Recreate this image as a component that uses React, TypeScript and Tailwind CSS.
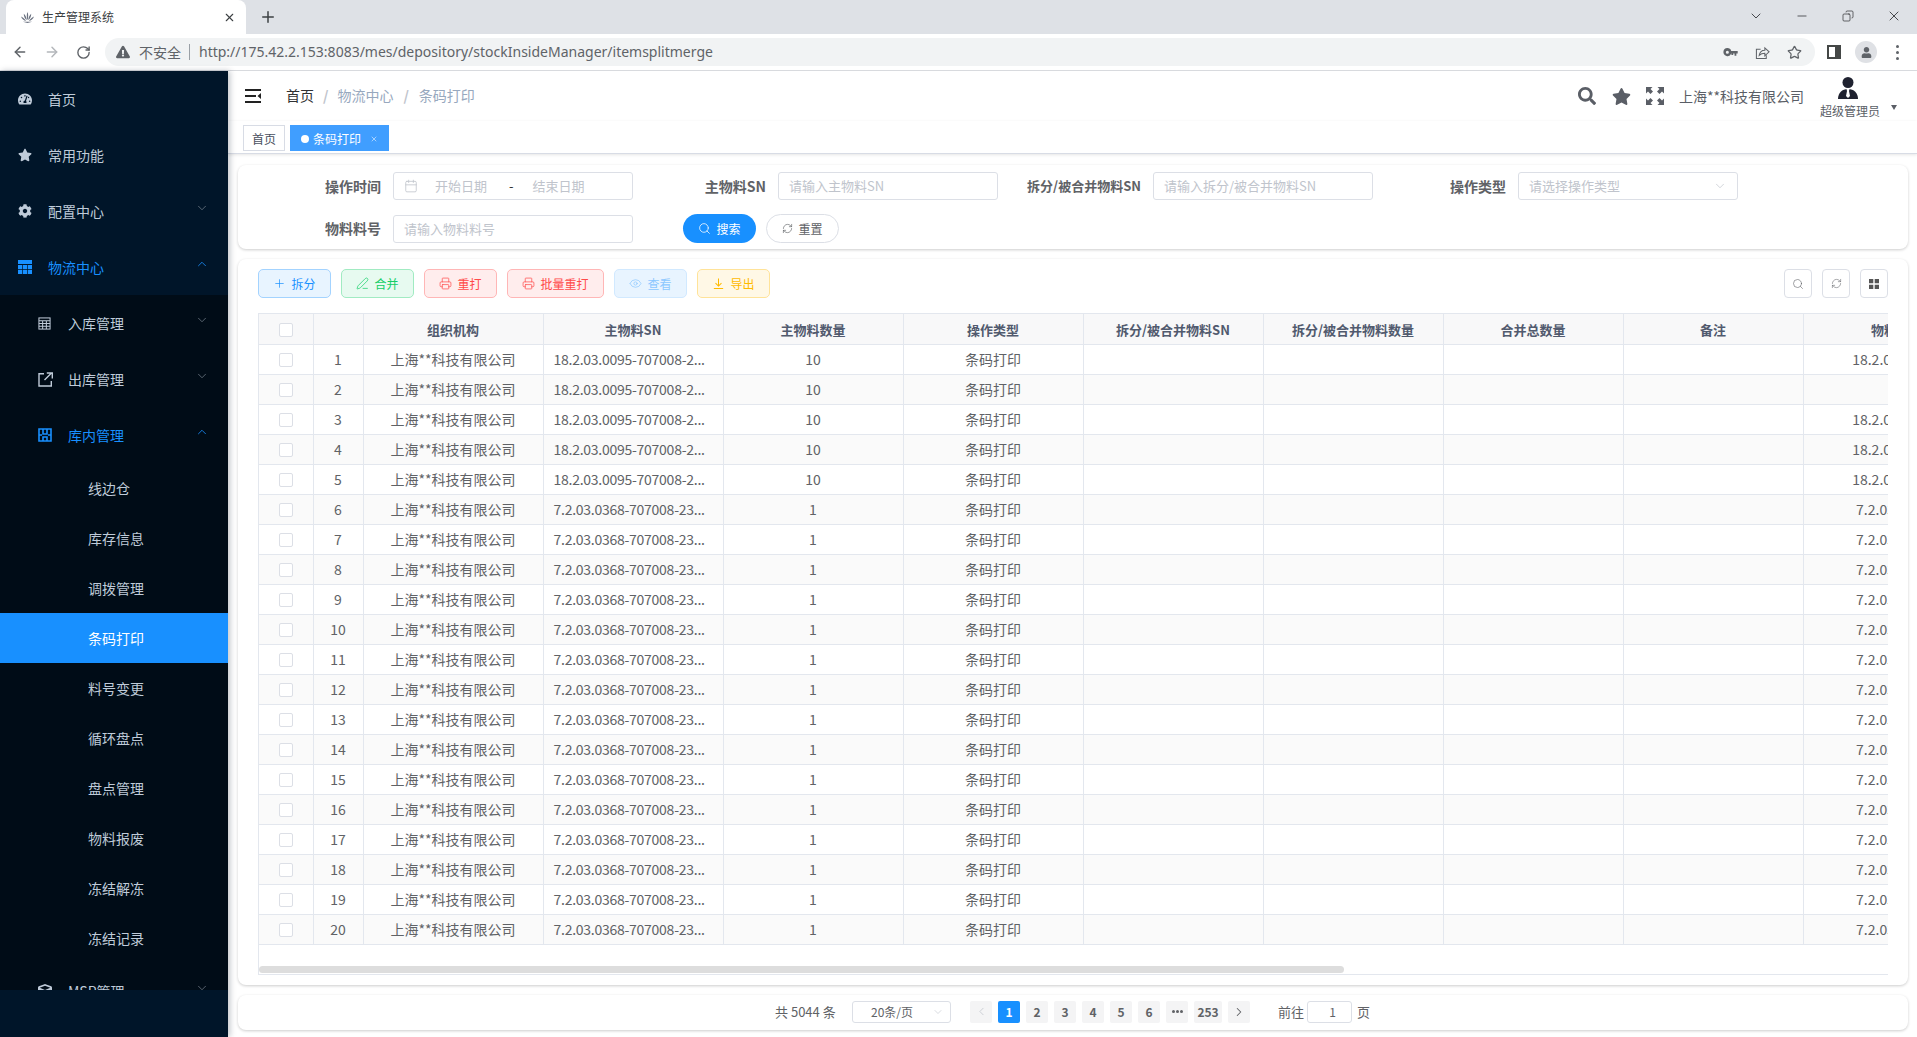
import React from "react";
import { ArrowLeft, ArrowRight, RotateCw, X, Plus, ChevronDown, ChevronUp, ChevronLeft, ChevronRight, Minus, Copy, Star, Search, Calendar, Printer, Eye, RefreshCw, PenLine } from "lucide-react";
import { FaTachometerAlt, FaStar, FaCog, FaCube, FaSearch, FaExclamationTriangle, FaUser } from "react-icons/fa";

const GridIcon = ({ className = "" }: { className?: string }) => (
  <svg viewBox="0 0 14 14" className={className} fill="currentColor"><path d="M0 0h14v4H0ZM0 5h4.200v4H0ZM4.900 5h4.200v4H4.900ZM9.800 5H14v4H9.800ZM0 9.800h4.200V14H0ZM4.900 9.800h4.200V14H4.900ZM9.800 9.800H14V14H9.800Z" /></svg>
);
const CalcIcon = ({ className = "" }: { className?: string }) => (
  <svg viewBox="0 0 14 14" className={className} fill="none" stroke="currentColor" strokeWidth="1.1"><rect x="1" y="1" width="12" height="12" /><path d="M1 4h12M1 7h12M1 10h12M5 4v9M9 4v9" /></svg>
);
const StockIcon = ({ className = "" }: { className?: string }) => (
  <svg viewBox="0 0 14 14" className={className} fill="none" stroke="currentColor" strokeWidth="1.6"><path d="M1 1h12v12H1zM1 7h3M10 7h3M5 1v5h4V1M5 13V9h4v4" /></svg>
);
const OutIcon = ({ className = "" }: { className?: string }) => (
  <svg viewBox="0 0 15 15" className={className} fill="none" stroke="currentColor" strokeWidth="1.4"><path d="M6 1.700H1v12.300h12.300V9" /><path d="M6.500 8 13.500 1M8.800 1h5.500v5.500" /></svg>
);
const Lotus = () => (
  <svg viewBox="0 0 16 14" className="h-[13px] w-[15px]" fill="#6b7280"><path d="M8 1c1 2 1 6 0 9-1-3-1-7 0-9ZM4 3c1.800 1.500 3 4 3.200 7C5.200 8.500 4 6 4 3Zm8 0c0 3-1.200 5.500-3.200 7C9 7 10.200 4.500 12 3ZM1 6c2 .8 4 2.500 5.500 4.800C4 10.500 2 8.500 1 6Zm14 0c-1 2.500-3 4.500-5.500 4.800C11 8.500 13 6.800 15 6ZM3 11.500h10L8 13Z" /></svg>
);
const MenuFold = () => (
  <svg viewBox="0 0 16 14" className="h-[14px] w-[16px]" fill="#222"><path d="M0 0h16v2H0zM0 6h11v2H0zM0 12h16v2H0zM16 4v6l-3.500-3z" /></svg>
);
const Person = () => (
  <svg viewBox="0 0 20 22" className="mr-[5px] h-[22px] w-[20px]"><circle cx="10" cy="5.500" r="5.500" fill="#1f2230" /><path d="M0 22c0-6 4-10 10-10s10 4 10 10Z" fill="#1f2230" /><path d="M8.500 12h3l-.5 2 1 5-2 2-2-2 1-5Z" fill="#fff" /></svg>
);
const Squares = () => (
  <svg viewBox="0 0 10 10" className="h-[10px] w-[10px]" fill="#555"><path d="M0 0h4.300v4.300H0zM5.700 0H10v4.300H5.700zM0 5.700h4.300V10H0zM5.700 5.700H10V10H5.700z" /></svg>
);
const FullScreen = () => (
  <svg viewBox="0 0 18 18" className="h-[18px] w-[18px]" fill="#5a5e66">
    <path d="M0 0h6.500L4.500 2l2.500 2.500L4.500 7 2 4.500 0 6.500Z" />
    <path d="M18 0h-6.500l2 2L11 4.500 13.500 7 16 4.500l2 2Z" />
    <path d="M0 18h6.500l-2-2L7 13.500 4.500 11 2 13.500l-2-2Z" />
    <path d="M18 18h-6.500l2-2-2.500-2.500 2.500-2.500 2.500 2.500 2-2Z" />
  </svg>
);
const KeyIcon = () => (
  <svg viewBox="0 0 16 10" className="h-[9px] w-[15px]" fill="#5f6368"><path d="M4.500 0A4.500 4.500 0 0 1 8.800 3.200H16v3h-1.500v2.300h-2V6.200h-1.500v1.500H9V6.200h-.2A4.500 4.500 0 1 1 4.500 0Zm0 3a1.700 1.700 0 1 0 0 3.400 1.700 1.700 0 0 0 0-3.400Z" fillRule="evenodd" /></svg>
);
const ShareIcon = () => (
  <svg viewBox="0 0 16 16" className="h-[15px] w-[15px]" fill="none" stroke="#5f6368" strokeWidth="1.100"><path d="M6 4.500H1.500v10H12v-3.500" /><path d="M4.500 11c.5-3.500 3-5.500 6-5.500V3l4.500 4.200-4.500 4.300V8.800c-2.500 0-4.500.7-6 2.200Z" /></svg>
);
const DownIcon = () => (
  <svg viewBox="0 0 14 14" className="h-[13px] w-[13px]" fill="none" stroke="currentColor" strokeWidth="1.100"><path d="M7 1.500v8M3.800 6.500 7 9.700l3.200-3.200M2 12.500h10" /></svg>
);

const Top = ({ icon, label, chevron, active }: { icon: React.ReactNode; label: string; chevron?: "up" | "down"; active?: boolean }) => (
  <div className={`flex h-[56px] items-center pl-[18px] pr-[19px] text-sm ${active ? "text-[#1890ff]" : "text-[#bfcbd9]"}`}>
    <span className="flex w-[30px] shrink-0 items-center">{icon}</span>
    <span>{label}</span>
    {chevron === "down" && <ChevronDown size={14} strokeWidth={1.2} className="mb-[6px] ml-auto text-[#7c8894]" />}
    {chevron === "up" && <ChevronUp size={14} strokeWidth={1.4} className="mb-[6px] ml-auto text-[#1890ff]" />}
  </div>
);
const Second = ({ icon, label, chevron, active }: { icon: React.ReactNode; label: string; chevron: "up" | "down"; active?: boolean }) => (
  <div className={`flex h-[56px] items-center pl-[38px] pr-[19px] text-sm ${active ? "text-[#1890ff]" : "text-[#bfcbd9]"}`}>
    <span className="flex w-[30px] shrink-0 items-center">{icon}</span>
    <span>{label}</span>
    {chevron === "down" ? <ChevronDown size={14} strokeWidth={1.2} className="mb-[6px] ml-auto text-[#7c8894]" /> : <ChevronUp size={14} strokeWidth={1.4} className="mb-[6px] ml-auto text-[#1890ff]" />}
  </div>
);
const Third = ({ label, active }: { label: string; active?: boolean }) => (
  <div className={`flex h-[50px] items-center pl-[88px] text-sm ${active ? "bg-[#1890ff] text-white" : "text-[#bfcbd9]"}`}>{label}</div>
);

const Sidebar = () => (
  <aside className="z-10 flex w-[228px] shrink-0 flex-col bg-[#001529] shadow-[2px_0_6px_rgba(0,21,41,0.25)]">
    <div className="h-[919px] shrink-0 overflow-hidden">
      <Top icon={<FaTachometerAlt size={14} />} label="首页" />
      <Top icon={<FaStar size={14} />} label="常用功能" />
      <Top icon={<FaCog size={14} />} label="配置中心" chevron="down" />
      <Top icon={<GridIcon className="h-[14px] w-[14px]" />} label="物流中心" chevron="up" active />
      <div className="bg-[#000c17]">
        <Second icon={<CalcIcon className="h-[13px] w-[13px]" />} label="入库管理" chevron="down" />
        <Second icon={<OutIcon className="h-[15px] w-[15px]" />} label="出库管理" chevron="down" />
        <Second icon={<StockIcon className="h-[14px] w-[14px]" />} label="库内管理" chevron="up" active />
        {["线边仓", "库存信息", "调拨管理"].map((t) => <Third key={t} label={t} />)}
        <Third label="条码打印" active />
        {["料号变更", "循环盘点", "盘点管理", "物料报废", "冻结解冻", "冻结记录"].map((t) => <Third key={t} label={t} />)}
        <Second icon={<FaCube size={14} />} label="MSP管理" chevron="down" />
      </div>
    </div>
  </aside>
);

const BrowserBar = () => (
  <>
    <div className="flex h-[34px] shrink-0 items-end bg-[#dee1e6] pl-[6px]">
      <div className="flex h-[34px] w-[240px] items-center rounded-t-lg bg-white pl-[14px] pr-[10px]">
        <Lotus />
        <span className="ml-[7px] text-xs text-[#3c4043]">生产管理系统</span>
        <X size={13} strokeWidth={2} className="ml-auto text-[#3c4043]" />
      </div>
      <Plus size={18} strokeWidth={2} className="mb-[8px] ml-[13px] text-[#3c4043]" />
      <div className="mb-[10px] ml-auto flex items-center text-[#202124]">
        <span className="flex w-[46px] justify-center"><ChevronDown size={16} strokeWidth={1.2} /></span>
        <span className="flex w-[46px] justify-center"><Minus size={14} strokeWidth={1.2} /></span>
        <span className="flex w-[46px] justify-center"><Copy size={12} strokeWidth={1.3} className="-scale-x-100" /></span>
        <span className="flex w-[46px] justify-center"><X size={16} strokeWidth={1.2} /></span>
      </div>
    </div>
    <div className="flex h-[37px] shrink-0 items-center border-b border-[#dadce0] bg-white pl-[12px] pr-[18px]">
      <ArrowLeft size={16} strokeWidth={2.2} className="text-[#5f6368]" />
      <ArrowRight size={16} strokeWidth={2.2} className="ml-[16px] text-[#b3b6ba]" />
      <RotateCw size={15} strokeWidth={2.2} className="ml-[16px] text-[#5f6368]" />
      <div className="ml-[14px] flex h-[28px] flex-1 items-center rounded-full bg-[#f1f3f4] pl-[11px] pr-[13px] text-sm text-[#5f6368]">
        <FaExclamationTriangle size={14} className="text-[#5f6368]" />
        <span className="ml-[9px]">不安全</span>
        <span className="mx-[8px] h-[16px] w-px bg-[#9aa0a6]" />
        <span className="ml-px font-['Noto_Sans',sans-serif] text-sm">http://175.42.2.153:8083/mes/depository/stockInsideManager/itemsplitmerge</span>
        <div className="ml-auto flex items-center gap-[17px]">
          <KeyIcon />
          <ShareIcon />
          <Star size={15} strokeWidth={2} />
        </div>
      </div>
      <div className="ml-[12px] h-[14px] w-[14px] border-2 border-r-[6px] border-[#444746]" />
      <div className="ml-[14px] flex h-[22px] w-[22px] items-center justify-center rounded-full bg-[#dfe1e5] text-[#5f6368]"><FaUser size={11} /></div>
      <span className="ml-[19px] flex flex-col gap-[3px]">
        <span className="h-[3px] w-[3px] rounded-full bg-[#5f6368]" />
        <span className="h-[3px] w-[3px] rounded-full bg-[#5f6368]" />
        <span className="h-[3px] w-[3px] rounded-full bg-[#5f6368]" />
      </span>
    </div>
  </>
);

const Header = () => (
  <>
    <div className="flex h-[50px] shrink-0 items-center bg-white pl-[17px] pr-[20px] shadow-[0_1px_3px_rgba(0,21,41,0.06)]">
      <MenuFold />
      <div className="mb-[2px] ml-[25px] flex items-center text-sm text-[#97a8be]">
        <span className="text-[#303133]">首页</span>
        <span className="mx-[9px] font-bold text-[#c0c4cc]">/</span>
        <span>物流中心</span>
        <span className="mx-[10px] font-bold text-[#c0c4cc]">/</span>
        <span>条码打印</span>
      </div>
      <div className="ml-auto flex items-center text-[#5a5e66]">
        <FaSearch size={18} />
        <FaStar size={19} className="ml-[16px]" />
        <span className="ml-[15px]"><FullScreen /></span>
        <span className="ml-[15px] text-sm">上海**科技有限公司</span>
        <div className="ml-[16px] mt-[4px] flex w-[60px] flex-col items-center">
          <Person />
          <span className="mt-[3px] text-xs leading-[17px]">超级管理员</span>
        </div>
        <span className="ml-[11px] mt-[22px] h-0 w-0 border-x-[3.500px] border-t-[5px] border-x-transparent border-t-[#5a5e66]" />
      </div>
    </div>
    <div className="flex h-[33px] shrink-0 items-center gap-[5px] border-b border-[#d8dce5] bg-white pl-[15px] pt-[2px] shadow-[0_1px_3px_rgba(0,0,0,0.1)]">
      <span className="flex h-[26px] w-[42px] items-center justify-center border border-[#d8dce5] pt-px text-xs text-[#495060]">首页</span>
      <span className="flex h-[26px] w-[99px] items-center justify-center bg-[#409eff] pt-px text-xs text-white">
        <span className="mr-[4px] h-[8px] w-[8px] rounded-full bg-white" />条码打印<X size={8} className="ml-[9px] opacity-80" />
      </span>
    </div>
  </>
);

const Field = ({ label, labelW, inputW, ph, select, small }: { label: string; labelW: string; inputW: string; ph: string; select?: boolean; small?: boolean }) => (
  <div className="flex items-center">
    <span className={`${labelW} ${small ? "text-[13px]" : "text-sm"} shrink-0 pb-px pr-[12px] text-right font-bold text-[#606266]`}>{label}</span>
    <div className={`${inputW} flex h-[28px] items-center rounded-[3px] border border-[#dcdfe6] pl-[10px] pr-[10px] text-[13px] text-[#c0c4cc]`}>
      <span>{ph}</span>
      {select && <ChevronDown size={14} strokeWidth={1.2} className="ml-auto" />}
    </div>
  </div>
);

const SearchCard = () => (
  <div className="flex h-[84px] shrink-0 flex-col gap-[14px] rounded-lg bg-white pt-[7px] shadow-[0_1px_3px_rgba(0,0,0,0.2)]">
    <div className="flex items-center">
      <span className="w-[155px] shrink-0 pb-px pr-[12px] text-right text-sm font-bold text-[#606266]">操作时间</span>
      <div className="flex h-[28px] w-[240px] items-center rounded-[3px] border border-[#dcdfe6] pl-[10px] text-[13px] text-[#c0c4cc]">
        <Calendar size={14} strokeWidth={1.4} />
        <span className="ml-[17px] w-[52px]">开始日期</span>
        <span className="ml-[22px] text-[#303133]">-</span>
        <span className="ml-[19px]">结束日期</span>
      </div>
      <Field label="主物料SN" labelW="w-[145px]" inputW="w-[220px]" ph="请输入主物料SN" />
      <Field label="拆分/被合并物料SN" labelW="w-[155px]" inputW="w-[220px]" ph="请输入拆分/被合并物料SN" small />
      <Field label="操作类型" labelW="w-[145px]" inputW="w-[220px]" ph="请选择操作类型" select />
    </div>
    <div className="flex items-center">
      <Field label="物料料号" labelW="w-[155px]" inputW="w-[240px]" ph="请输入物料料号" />
      <button className="ml-[50px] flex h-[29px] w-[73px] items-center justify-center gap-[5px] rounded-full bg-[#1890ff] text-xs text-white"><Search size={13} strokeWidth={1.4} />搜索</button>
      <button className="ml-[10px] flex h-[29px] w-[73px] items-center justify-center gap-[5px] rounded-full border border-[#dcdfe6] bg-white text-xs text-[#606266]"><RefreshCw size={11} strokeWidth={1.4} />重置</button>
    </div>
  </div>
);

const tools = [
  { t: "拆分", w: "w-[73px]", c: "border-[#a3d3ff] bg-[#e8f4ff] text-[#1890ff]", i: <Plus size={13} strokeWidth={1.3} /> },
  { t: "合并", w: "w-[73px]", c: "border-[#a1ebc2] bg-[#e7faf0] text-[#13ce66]", i: <PenLine size={13} strokeWidth={1.3} /> },
  { t: "重打", w: "w-[73px]", c: "border-[#ffb6b6] bg-[#ffeded] text-[#ff4949]", i: <Printer size={13} strokeWidth={1.3} /> },
  { t: "批量重打", w: "w-[97px]", c: "border-[#ffb6b6] bg-[#ffeded] text-[#ff4949]", i: <Printer size={13} strokeWidth={1.3} /> },
  { t: "查看", w: "w-[73px]", c: "border-[#d1e9ff] bg-[#e8f4ff] text-[#8cc8ff]", i: <Eye size={13} strokeWidth={1.3} /> },
  { t: "导出", w: "w-[73px]", c: "border-[#ffe399] bg-[#fff8e6] text-[#ffba00]", i: <DownIcon /> },
];

const headers = ["组织机构", "主物料SN", "主物料数量", "操作类型", "拆分/被合并物料SN", "拆分/被合并物料数量", "合并总数量", "备注", "物料SN"];
const rows = Array.from({ length: 20 }, (_, i) => i + 1);
const cell = "border-r border-b border-[#e3e7ee] px-[10px] text-center";

const TableCard = () => (
  <div className="mt-[10px] flex h-[726px] shrink-0 flex-col rounded-lg bg-white px-[20px] pb-[10px] pt-[10px] shadow-[0_1px_3px_rgba(0,0,0,0.2)]">
    <div className="flex h-[29px] shrink-0 items-center gap-[10px]">
      {tools.map((b) => (
        <button key={b.t} className={`${b.w} ${b.c} flex h-[29px] items-center justify-center gap-[5px] rounded-[5px] border text-xs`}>{b.i}{b.t}</button>
      ))}
      <div className="ml-auto flex gap-[10px]">
        <span className="flex h-[29px] w-[28px] items-center justify-center rounded-[4px] border border-[#dcdfe6] text-[#606266]"><Search size={12} strokeWidth={1.2} /></span>
        <span className="flex h-[29px] w-[28px] items-center justify-center rounded-[4px] border border-[#dcdfe6] text-[#606266]"><RefreshCw size={11} strokeWidth={1.2} /></span>
        <span className="flex h-[29px] w-[28px] items-center justify-center rounded-[4px] border border-[#dcdfe6]"><Squares /></span>
      </div>
    </div>
    <div className="mt-[15px] flex min-h-0 flex-1 flex-col border-b border-l border-t border-[#e3e7ee]">
      <div className="min-h-0 flex-1 overflow-hidden">
        <table className="w-[1724px] table-fixed border-collapse text-sm text-[#606266]">
          <colgroup>
            <col className="w-[54px]" />
            <col className="w-[50px]" />
            {headers.map((h) => <col key={h} className="w-[180px]" />)}
          </colgroup>
          <thead>
            <tr className="h-[30px] bg-[#f8f8f9]">
              <th className={cell}><span className="mx-auto mt-[2px] block h-[14px] w-[14px] rounded-[2px] border border-[#dcdfe6] bg-white" /></th>
              <th className={cell} />
              {headers.map((h) => <th key={h} className={`${cell} pt-[3px] text-[13px] font-bold text-[#515a6e]`}>{h}</th>)}
            </tr>
          </thead>
          <tbody>
            {rows.map((n) => {
              const sn = n <= 5 ? "18.2.03.0095-707008-2..." : "7.2.03.0368-707008-23...";
              const last = n === 2 ? "" : n <= 5 ? "18.2.03.0095" : "7.2.03.0368";
              return (
                <tr key={n} className={`h-[30px] ${n % 2 === 0 ? "bg-[#fafafa]" : "bg-white"}`}>
                  <td className={cell}><span className="mx-auto mt-[2px] block h-[14px] w-[14px] rounded-[2px] border border-[#dcdfe6] bg-white" /></td>
                  <td className={cell}>{n}</td>
                  <td className={cell}>上海**科技有限公司</td>
                  <td className="truncate border-b border-r border-[#e3e7ee] px-[10px] text-left tracking-[-0.26px]">{sn}</td>
                  <td className={cell}>{n <= 5 ? 10 : 1}</td>
                  <td className={cell}>条码打印</td>
                  <td className={cell} />
                  <td className={cell} />
                  <td className={cell} />
                  <td className={cell} />
                  <td className={cell}>{last}</td>
                </tr>
              );
            })}
          </tbody>
        </table>
      </div>
      <div className="h-[8px] shrink-0"><div className="h-[7px] w-[1085px] rounded-full bg-[#dddddd]" /></div>
    </div>
  </div>
);

const Page = ({ children, active, w = "w-[22px]" }: { children: React.ReactNode; active?: boolean; w?: string }) => (
  <span className={`${w} flex h-[22px] items-center justify-center rounded-[2px] text-xs font-bold ${active ? "bg-[#1890ff] text-white" : "bg-[#f4f4f5] text-[#606266]"}`}>{children}</span>
);

const Pager = () => (
  <div className="mt-[10px] flex h-[35px] shrink-0 items-center rounded-lg bg-white pb-[2px] pl-[537px] text-[13px] text-[#606266] shadow-[0_1px_3px_rgba(0,0,0,0.2)]">
    <span className="w-[77px] shrink-0">共 5044 条</span>
    <span className="flex h-[22px] w-[99px] items-center rounded-[3px] border border-[#dcdfe6] pl-[18px] pr-[6px] text-xs">20条/页<ChevronDown size={12} strokeWidth={1.2} className="ml-auto text-[#c0c4cc]" /></span>
    <div className="ml-[19px] flex gap-[6px]">
      <Page><ChevronLeft size={13} strokeWidth={1.4} className="text-[#c0c4cc]" /></Page>
      <Page active>1</Page>
      {["2", "3", "4", "5", "6"].map((p) => <Page key={p}>{p}</Page>)}
      <Page><span className="flex gap-px"><i className="h-[3px] w-[3px] rounded-full bg-[#606266]" /><i className="h-[3px] w-[3px] rounded-full bg-[#606266]" /><i className="h-[3px] w-[3px] rounded-full bg-[#606266]" /></span></Page>
      <Page w="w-[28px]">253</Page>
      <Page><ChevronRight size={14} strokeWidth={1.8} className="text-[#606266]" /></Page>
    </div>
    <span className="ml-[28px]">前往</span>
    <span className="ml-[3px] flex h-[22px] w-[45px] items-center justify-center rounded-[3px] border border-[#dcdfe6] pl-[6px] text-xs">1</span>
    <span className="ml-[5px]">页</span>
  </div>
);

export default function App() {
  return (
    <div className="flex h-screen w-full flex-col overflow-hidden bg-white font-['Noto_Sans_CJK_SC','Noto_Sans',sans-serif]">
      <BrowserBar />
      <div className="flex min-h-0 flex-1">
        <Sidebar />
        <main className="flex min-w-0 flex-1 flex-col">
          <Header />
          <div className="flex flex-col pl-[10px] pr-[9px] pt-[11px]">
            <SearchCard />
            <TableCard />
            <Pager />
          </div>
        </main>
      </div>
    </div>
  );
}
